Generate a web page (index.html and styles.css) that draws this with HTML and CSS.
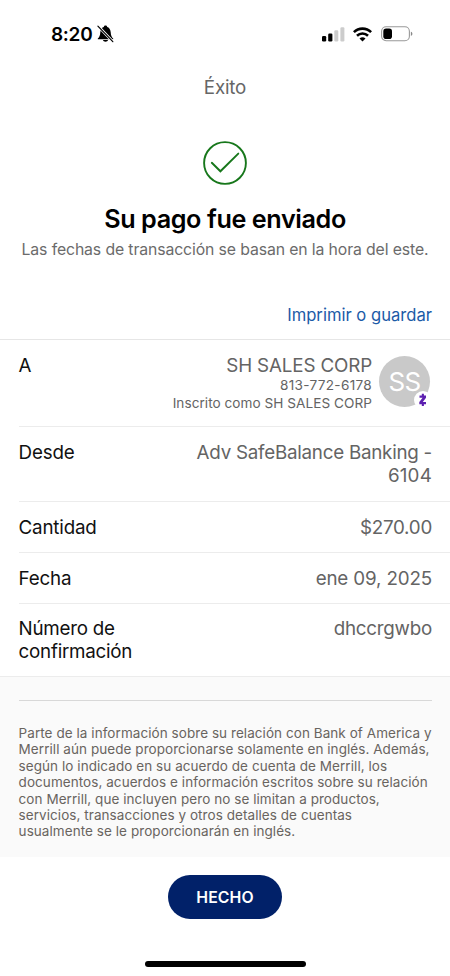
FILE: index.html
```html
<!DOCTYPE html>
<html lang="es">
<head>
<meta charset="utf-8">
<title>Éxito</title>
<link rel="stylesheet" href="styles.css">
</head>
<body>
<div class="status">
  <span class="time">8:20</span>
  <svg class="bell" width="17" height="18" viewBox="0 0 17 18"><path d="M.8 13.600C2.400 12 3.100 10.500 3.300 7.200 3.500 4.200 5 2.400 6.800 1.900 7 .9 7.700.5 8.500.5s1.500.4 1.700 1.400C12 2.400 13.500 4.200 13.700 7.200c.2 3.300.9 4.800 2.500 6.400v.7H.8zM6 15h5c-.2 1.100-1.200 1.700-2.500 1.700S6.200 16.100 6 15z"/><path d="M1.200 1.100 15.800 16.600" stroke="#fff" stroke-width="2.800"/><path d="M.9 1.200 15.800 16.700" stroke="#000" stroke-width="1.200" stroke-linecap="round"/></svg>
  <svg class="signal" width="23" height="15" viewBox="0 0 23 15"><rect x="0" y="9" width="4.200" height="5.500" rx="1.200"/><rect x="6.200" y="6.500" width="4.200" height="8" rx="1.200"/><g fill="#ccc"><rect x="12.300" y="3.300" width="4" height="11.200" rx="1.200"/><rect x="18.400" y=".2" width="4" height="14.300" rx="1.200"/></g></svg>
  <svg class="wifi" width="19" height="15" viewBox="0 0 19 15"><g fill="none" stroke="#000" stroke-width="2.600"><path d="M.9 5.100a12.300 12.300 0 0 1 17.200 0"/><path d="M4 8.700a7.900 7.900 0 0 1 11 0"/></g><path d="M6.500 11.600a4.500 4.500 0 0 1 6 0L9.500 14.600z"/></svg>
  <svg class="battery" width="32" height="16" viewBox="0 0 32 16"><rect x=".6" y=".8" width="27.800" height="14" rx="4.500" fill="none" stroke="#999" stroke-width="1.100"/><rect x="2.300" y="2.600" width="8.700" height="10.400" rx="2.800"/><path d="M29.900 5.700c2 .6 2 3.500 0 4.200z" fill="#888"/></svg>
</div>
<header class="title">Éxito</header>
<main>
  <section class="hero">
    <svg class="check" width="44" height="44" viewBox="0 0 44 44" fill="none" stroke="#17771b"><circle cx="22" cy="22" r="20.900" stroke-width="1.900"/><path d="M8.800 21.800 17.400 30.300 35.300 12.600" stroke-width="1.900" stroke-linecap="round"/></svg>
    <h1>Su pago fue enviado</h1>
    <p>Las fechas de transacción se basan en la hora del este.</p>
  </section>
  <div class="print"><a>Imprimir o guardar</a></div>
  <section class="details">
    <div class="row payee">
      <div class="label">A</div>
      <div class="value">
        <div class="name">SH SALES CORP</div>
        <div class="sub phone">813-772-6178</div>
        <div class="sub">Inscrito como SH SALES CORP</div>
      </div>
      <div class="avatar">SS
        <svg class="zelle" width="18" height="18" viewBox="0 0 18 18"><circle cx="9" cy="9" r="9" fill="#fff"/><path d="M5.500 4.500h6.500v2.300L8.800 11h3.200v2.300H5.300v-2.200L8.600 6.800H5.500zM7.800 2.700h2.100v2H7.800zM7.800 13.100h2.100v2H7.800z" fill="#5c1fb0"/></svg>
      </div>
    </div>
    <div class="row source"><div class="label">Desde</div><div class="value">Adv SafeBalance Banking -<br><span class="digits">6104</span></div></div>
    <div class="row"><div class="label">Cantidad</div><div class="value">$270.00</div></div>
    <div class="row"><div class="label">Fecha</div><div class="value date">ene 09, 2025</div></div>
    <div class="row"><div class="label">Número de<br>confirmación</div><div class="value">dhccrgwbo</div></div>
  </section>
  <section class="legal">
    <p>Parte de la información sobre su relación con Bank of America y<br>Merrill aún puede proporcionarse solamente en inglés. Además,<br>según lo indicado en su acuerdo de cuenta de Merrill, los<br>documentos, acuerdos e información escritos sobre su relación<br>con Merrill, que incluyen pero no se limitan a productos,<br>servicios, transacciones y otros detalles de cuentas<br>usualmente se le proporcionarán en inglés.</p>
  </section>
</main>
<footer><button>HECHO</button><div class="home"></div></footer>
</body>
</html>
```
FILE: styles.css
```css
* { box-sizing: border-box; }
body { margin: 0; width: 450px; height: 976px; overflow: hidden; background: #fff; color: #111; font-family: Inter, "Liberation Sans", sans-serif; font-size: 18.8px; line-height: 23px; white-space: nowrap; }
h1, p { margin: 0; }
svg { display: block; flex: none; }
.status { display: flex; align-items: center; height: 68px; padding: 0 37px 0 51px; }
.time { font-size: 19px; font-weight: 600; color: #000; letter-spacing: -.3px; width: 46px; }
.signal { margin-left: auto; }
.wifi { margin-left: 8px; }
.battery { margin-left: 9px; }
.title { height: 73px; padding-top: 8px; text-align: center; color: #666; font-size: 18.8px; letter-spacing: -.2px; }
.hero { display: flex; flex-direction: column; align-items: center; height: 162px; }
.hero h1 { margin-top: 18px; font-size: 25.2px; line-height: 32px; font-weight: 600; letter-spacing: -.4px; color: #000; }
.hero p { margin-top: 4px; line-height: 22px; font-size: 15.8px; letter-spacing: -.12px; color: #6b6b6b; }
.print { height: 36px; padding-right: 18px; text-align: right; font-size: 16.6px; line-height: 25px; color: #1c5ba7; }
.details { border-top: 1px solid #e6e6e6; }
.row { display: flex; justify-content: space-between; margin-left: 18.600px; padding: 14px 18px 13px 0; border-bottom: 1px solid #ececec; }
.row:last-child { margin-left: 0; padding-left: 18.600px; line-height: 22.500px; }
.label { letter-spacing: -.2px; }
.row:last-child .label { letter-spacing: -.25px; }
.value { flex: 1; text-align: right; color: #646464; letter-spacing: -.25px; }
.digits { letter-spacing: .2px; }
.date { letter-spacing: -.15px; }
.payee { height: 87px; }
.source { padding-bottom: 14px; }
.name { letter-spacing: -.15px; }
.sub { font-size: 13.6px; line-height: 18px; letter-spacing: .04px; margin-bottom: -.3px; }
.phone { letter-spacing: .3px; margin-top: -1px; }
.avatar { position: relative; width: 51px; height: 51px; margin: 2px 2px 0 7px; border-radius: 50%; background: #c9c9c9; color: #fff; text-align: center; font-size: 26px; line-height: 52px; letter-spacing: -.6px; }
.zelle { position: absolute; left: 35px; top: 35px; }
.legal { height: 180px; padding: 23px 18px 0 18.600px; background: #fafafa; }
.legal p { border-top: 1px solid #d8d8d8; padding-top: 24px; font-size: 13.5px; line-height: 16.4px; letter-spacing: .06px; color: #69645f; }
footer { display: flex; flex-direction: column; align-items: center; padding-top: 18px; }
button { width: 114px; height: 44px; border: 0; border-radius: 22px; background: #012169; color: #fff; font: 600 15.8px Inter, sans-serif; letter-spacing: .1px; }
.home { width: 161px; height: 6px; margin-top: 42px; border-radius: 3px; background: #000; }
```
